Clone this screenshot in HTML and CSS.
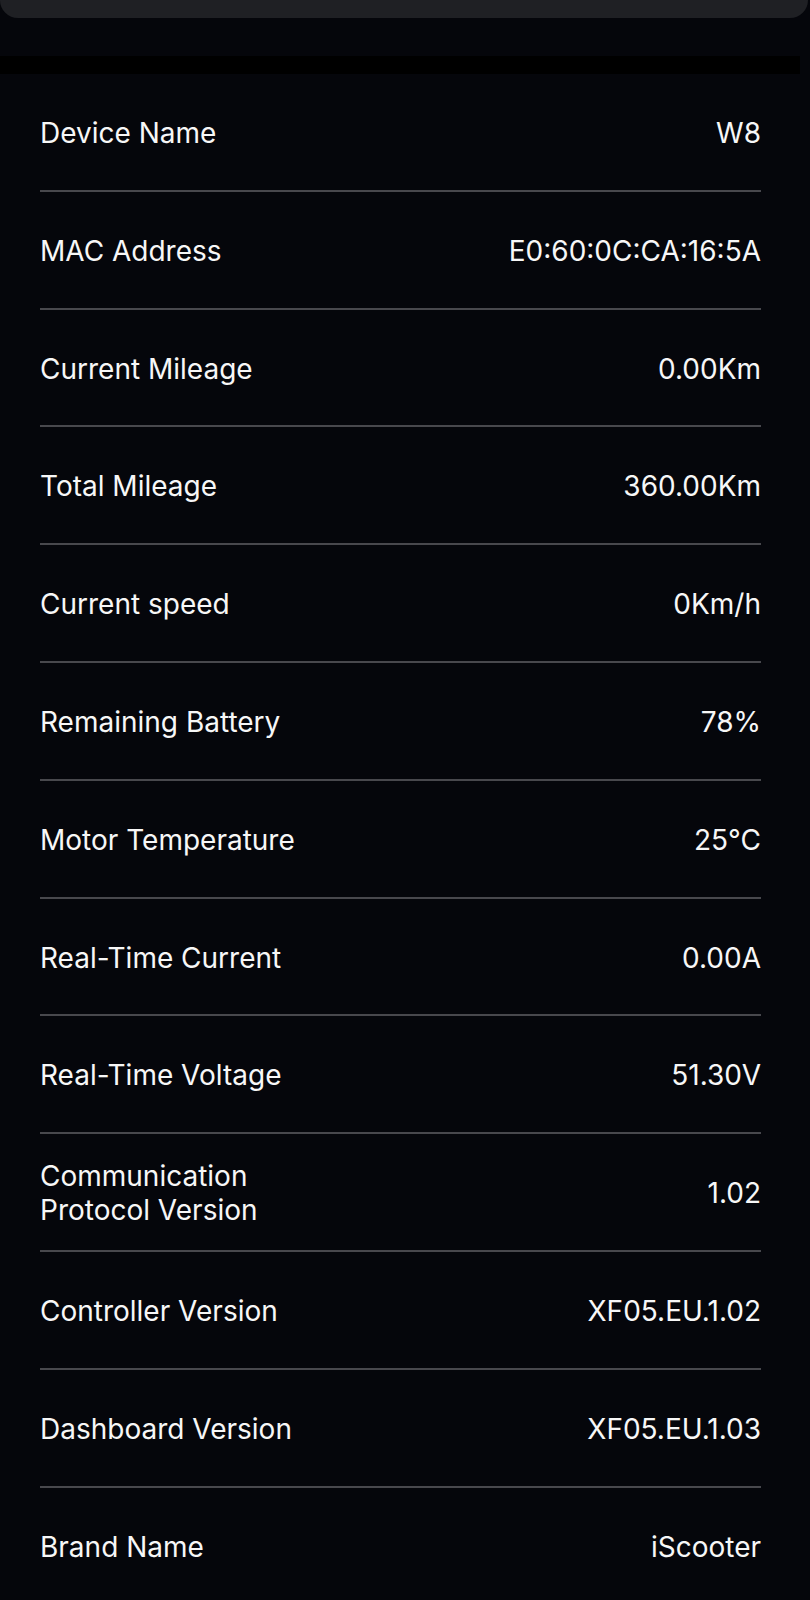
FILE: index.html
```html
<!DOCTYPE html>
<html>
<head>
	<title>Device Info</title>
	<meta charset="utf-8">
	<link rel="stylesheet" href="styles.css">
</head>
<body>
	<div class="top-card"></div>
	<div class="strip"></div>
	<div class="panel">
		<ul class="info">
			<li><span class="label">Device Name</span><span class="value">W8</span></li>
			<li><span class="label">MAC Address</span><span class="value">E0:60:0C:CA:16:5A</span></li>
			<li><span class="label">Current Mileage</span><span class="value">0.00Km</span></li>
			<li><span class="label">Total Mileage</span><span class="value">360.00Km</span></li>
			<li><span class="label">Current speed</span><span class="value">0Km/h</span></li>
			<li><span class="label">Remaining Battery</span><span class="value">78%</span></li>
			<li><span class="label">Motor Temperature</span><span class="value">25°C</span></li>
			<li><span class="label">Real-Time Current</span><span class="value">0.00A</span></li>
			<li><span class="label">Real-Time Voltage</span><span class="value">51.30V</span></li>
			<li><span class="label">Communication Protocol Version</span><span class="value">1.02</span></li>
			<li><span class="label">Controller Version</span><span class="value">XF05.EU.1.02</span></li>
			<li><span class="label">Dashboard Version</span><span class="value">XF05.EU.1.03</span></li>
			<li class="last"><span class="label">Brand Name</span><span class="value">iScooter</span></li>
		</ul>
	</div>
</body>
</html>
```

FILE: styles.css
```css
body,div,ul,li{margin:0;padding:0;}
ul{list-style-type:none;}
body{background:#05060b;font:28px/1.2 Inter,"Liberation Sans",Arial,sans-serif;color:#f7f7f7;overflow:hidden;}
.top-card{height:18px;margin-right:2px;background:#1f2024;border-radius:0 0 18px 18px;}
.strip{height:18px;margin-top:38px;background:#000;margin-right:10px;}
.panel{padding:0 49px 0 40px;}
.info li{display:flex;align-items:center;justify-content:space-between;height:111.8px;padding-top:4px;border-bottom:2px solid #48484d;}
.info li.last{border-bottom:none;}
.info .label{max-width:270px;}
.info .value{text-align:right;}
```
